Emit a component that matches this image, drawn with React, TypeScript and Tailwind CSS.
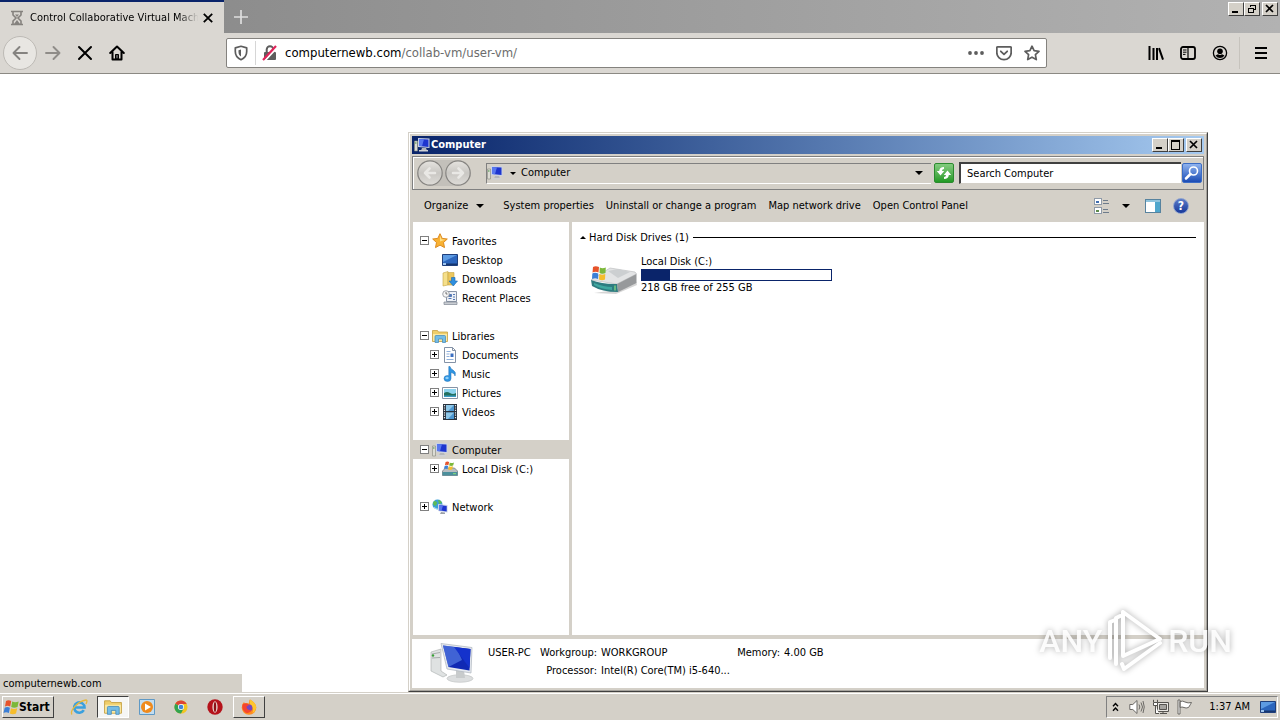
import type { ReactNode } from 'react';

type IconProps = { className?: string };

export default function App() {
  return (
    <div className="relative flex h-screen flex-col overflow-hidden bg-white font-['DejaVu_Sans_Condensed','DejaVu_Sans',sans-serif] text-[11px] leading-[14px] text-black">
      <TabStrip />
      <NavToolbar />
      <main className="relative flex flex-1 items-end">
        <p className="h-[18px] w-[242px] bg-[#d4d0c8] pl-[3px] leading-5">computernewb.com</p>
      </main>
      <ExplorerWindow />
      <Taskbar />
      <Watermark />
    </div>
  );
}

/* ---------- browser ---------- */

function TabStrip() {
  return (
    <header className="flex h-[33px] shrink-0 bg-linear-to-r from-[#858585] to-[#b2b2b2]">
      <div className="flex w-56 items-center border-t-2 border-[#0a246a] bg-[#dad7d2] pl-[10px]">
        <Hourglass className="h-4 w-3.5 shrink-0" />
        <span className="ml-1.5 w-[172px] whitespace-nowrap mask-r-from-86% mask-r-to-98%">
          Control Collaborative Virtual Mach
        </span>
        <button aria-label="Close tab" className="p-px">
          <svg viewBox="0 0 10 10" className="size-[10px]" stroke="#000" strokeWidth="1.8">
            <path d="M.8.8l8.4 8.4M9.2.8L.8 9.2" />
          </svg>
        </button>
      </div>
      <button aria-label="New tab" className="ml-[9px] self-center">
        <svg viewBox="0 0 16 16" className="size-4" stroke="#dedede" strokeWidth="1.7">
          <path d="M8 1v14M1 8h14" />
        </svg>
      </button>
      <div className="ml-auto flex pt-[2px] pr-[2px]">
        <CaptionButton label="Minimize browser" kind="min" />
        <CaptionButton label="Restore browser" kind="restore" />
        <div className="w-[2px]" />
        <CaptionButton label="Close browser" kind="close" />
      </div>
    </header>
  );
}

function NavToolbar() {
  return (
    <nav className="flex h-[41px] shrink-0 items-center border-b border-[#8b8983] bg-[#dad7d2]">
      <div className="flex w-[226px] items-center pl-[3px]">
        <button aria-label="Back" className="flex size-[34px] items-center justify-center rounded-full border border-[#bdbab5] bg-[#e8e6e2]">
          <svg viewBox="0 0 16 16" className="size-4" fill="none" stroke="#858380" strokeWidth="1.9" strokeLinecap="round" strokeLinejoin="round">
            <path d="M15 8H1.5M7.5 2L1.5 8l6 6" />
          </svg>
        </button>
        <button aria-label="Forward" className="ml-2">
          <svg viewBox="0 0 16 16" className="size-4" fill="none" stroke="#8f8c88" strokeWidth="1.9" strokeLinecap="round" strokeLinejoin="round">
            <path d="M1 8h13.5M8.500 2l6 6-6 6" />
          </svg>
        </button>
        <button aria-label="Stop" className="ml-4">
          <svg viewBox="0 0 16 16" className="size-4" stroke="#000" strokeWidth="2" strokeLinecap="round">
            <path d="M2 2l12 12M14 2L2 14" />
          </svg>
        </button>
        <button aria-label="Home" className="ml-4">
          <svg viewBox="0 0 16 16" className="size-4" fill="none" stroke="#000" strokeWidth="2" strokeLinejoin="round" strokeLinecap="round">
            <path d="M1.200 8L8 1.500 14.800 8M3.500 7v7.500h9V7" />
            <path d="M6.500 13.500v-4h3v4z" fill="#000" strokeWidth="1" />
            <path d="M8 10.500v2" stroke="#fff" strokeWidth=".7" />
          </svg>
        </button>
      </div>

      <div className="flex h-[30px] flex-1 items-center rounded-[2px] border border-[#84827e] bg-white pr-[6px] pl-1.5 text-[13px] leading-4">
        <svg viewBox="0 0 16 16" className="size-4 shrink-0" fill="none" stroke="#5d5d5d" strokeWidth="1.7">
          <path d="M8 1.300L2.300 2.900v3.600c0 4 2.200 6.700 5.700 8.200 3.500-1.500 5.700-4.200 5.700-8.200V2.900z" strokeLinejoin="round" />
          <path d="M8 4.500L5.500 5.200v1.800c0 2 .9 3.500 2.500 4.600z" fill="#5d5d5d" stroke="none" />
        </svg>
        <span className="ml-[6px] h-6 w-px bg-[#d6d6d6]" />
        <svg viewBox="0 0 16 16" className="ml-1.5 size-4 shrink-0" fill="none">
          <path d="M4.700 7V4.500a3.300 3.300 0 016.600 0V7" stroke="#5d5d5d" strokeWidth="2" />
          <rect x="2" y="7" width="12" height="8" rx="1" fill="#5d5d5d" />
          <path d="M2.500 16L15.500 2" stroke="#fff" strokeWidth="2" />
          <path d="M1 15L14 1" stroke="#e0245a" strokeWidth="2.200" />
        </svg>
        <label htmlFor="url" className="ml-[7px]">computernewb.com</label>
        <input id="url" defaultValue="/collab-vm/user-vm/" className="min-w-0 flex-1 text-[#6c6c6c] outline-none" />
        <button aria-label="Page actions">
          <svg viewBox="0 0 16 16" className="size-4" fill="#5d5d5d">
            <circle cx="2" cy="8" r="1.900" /><circle cx="8" cy="8" r="1.900" /><circle cx="14" cy="8" r="1.900" />
          </svg>
        </button>
        <button aria-label="Save to Pocket" className="ml-3">
          <svg viewBox="0 0 16 16" className="size-4" fill="none" stroke="#5d5d5d" strokeWidth="1.800" strokeLinecap="round" strokeLinejoin="round">
            <path d="M1.800 1.800h12.400q1 0 1 1V7.500a7.200 7.200 0 01-14.400 0V2.800q0-1 1-1z" />
            <path d="M4.800 6.300L8 9.300l3.200-3" />
          </svg>
        </button>
        <button aria-label="Bookmark" className="ml-3">
          <svg viewBox="0 0 16 16" className="size-4" fill="none" stroke="#5d5d5d" strokeWidth="1.700" strokeLinejoin="round">
            <path d="M8 1.200l2.100 4.500 4.900.6-3.600 3.400.9 4.900L8 12.200l-4.300 2.400.9-4.900L1 6.300l4.900-.6z" />
          </svg>
        </button>
      </div>

      <div className="flex w-[233px] items-center justify-end pr-[11px]">
        <button aria-label="Library">
          <svg viewBox="0 0 16 16" className="size-4" stroke="#000" strokeWidth="2">
            <path d="M1.500 1v14M5.500 3v12M9 3v12M11 3.200l4 11.500" />
          </svg>
        </button>
        <button aria-label="Sidebars" className="ml-4">
          <svg viewBox="0 0 16 16" className="size-4" fill="none" stroke="#000" strokeWidth="1.800">
            <rect x="1" y="2" width="14" height="12" rx="2" />
            <path d="M8 2v12" strokeWidth="1.200" />
            <path d="M3 5h3.500M3 7.200h3.500M3 9.400h2.500" strokeWidth="1" />
          </svg>
        </button>
        <button aria-label="Account" className="ml-4">
          <svg viewBox="0 0 16 16" className="size-4">
            <circle cx="8" cy="8" r="6.600" fill="none" stroke="#000" strokeWidth="1.300" />
            <circle cx="8" cy="6.200" r="2.800" />
            <path d="M3.500 10.500q1.500-1 2.500-1.200 2 1.300 4 0 1 .2 2.500 1.200Q10.800 13 8 13t-4.500-2.500z" />
          </svg>
        </button>
        <span className="mx-[11px] h-8 w-px bg-[#c6c3bd]" />
        <button aria-label="Menu" className="ml-[2px]">
          <svg viewBox="0 0 16 16" className="size-4" stroke="#000" strokeWidth="2">
            <path d="M2 3h12M2 8h12M2 13h12" />
          </svg>
        </button>
      </div>
    </nav>
  );
}

function CaptionButton({ label, kind }: { label: string; kind: 'min' | 'max' | 'restore' | 'close' }) {
  return (
    <button
      aria-label={label}
      className="flex h-[14px] w-4 items-center justify-center border border-t-white border-r-[#404040] border-b-[#404040] border-l-white bg-[#d4d0c8]"
    >
      <svg viewBox="0 0 12 10" className="h-[10px] w-3" fill="none" stroke="#000" shapeRendering="crispEdges">
        {kind === 'min' && <path d="M2 8h6" strokeWidth="2" />}
        {kind === 'max' && <path d="M1.500 1v8.500h8V1M1 1h9" strokeWidth="1.500" />}
        {kind === 'restore' && <path d="M4.500 3V1.500h5v4H8M4 1h6M2.500 4.500h5v4h-5zM2 4h6" />}
        {kind === 'close' && <path d="M2 1l7 7M9 1L2 8" strokeWidth="1.700" shapeRendering="auto" />}
      </svg>
    </button>
  );
}

/* ---------- explorer window ---------- */

function ExplorerWindow() {
  return (
    <section className="absolute top-[132px] right-[72px] bottom-7 left-[408px] z-10 flex flex-col border border-t-[#d4d0c8] border-r-[#404040] border-b-[#404040] border-l-[#d4d0c8] bg-[#d4d0c8]">
      <div className="flex min-h-0 flex-1 flex-col border border-t-white border-r-[#a5a29c] border-b-[#a5a29c] border-l-white p-[2px]">
        <div className="flex h-[18px] shrink-0 items-center bg-linear-to-r from-[#0a246a] to-[#a6caf0] px-[2px]">
          <Monitor className="size-4" />
          <h1 className="ml-px flex-1 text-[11px] font-bold text-white">Computer</h1>
          <CaptionButton label="Minimize" kind="min" />
          <CaptionButton label="Maximize" kind="max" />
          <div className="w-[2px]" />
          <CaptionButton label="Close" kind="close" />
        </div>
        <AddressRow />
        <CommandBar />
        <div className="flex min-h-0 flex-1">
          <Sidebar />
          <DrivePane />
        </div>
        <DetailsPane />
      </div>
    </section>
  );
}

function AddressRow() {
  return (
    <div className="mt-[2px] flex h-[34px] shrink-0 items-center border border-[#808080] pl-1 shadow-[inset_1px_1px_0_#fff]">
      <div className="flex rounded-full bg-[#c3c0ba]">
        <RoundArrow label="Back" d="M18 13H8M12.500 8.500L8 13l4.500 4.500" />
        <span className="w-[2px]" />
        <RoundArrow label="Forward" d="M8 13h10M13.500 8.500L18 13l-4.500 4.500" />
      </div>
      <div className="ml-[15px] flex h-[21px] flex-1 items-center border-t border-b border-l border-t-[#808080] border-b-white border-l-[#808080] pr-2">
        <Monitor className="size-4" />
        <Caret className="ml-[7px] w-1.5" />
        <button className="ml-[5px]">Computer</button>
        <button aria-label="Previous locations" className="ml-auto">
          <Caret className="w-2" />
        </button>
      </div>
      <button aria-label="Refresh" className="ml-[3px] flex size-5 items-center justify-center rounded-[2px] border border-[#2b8a2e] bg-linear-to-b from-[#83cc7f] to-[#1f9a23]">
        <svg viewBox="0 0 16 16" className="size-4" fill="#fff">
          <path d="M8 2Q3.500 2 3.200 6H.8L4.500 10.500 8.200 6H6Q6 4.200 8 4z" />
          <path d="M8 14q4.500 0 4.800-4h2.400L11.500 5.500 7.800 10H10q0 1.800-2 2z" />
        </svg>
      </button>
      <input
        aria-label="Search Computer"
        placeholder="Search Computer"
        className="ml-[5px] h-[22px] w-[222px] border-t-2 border-b border-l-2 border-t-[#404040] border-b-[#d4d0c8] border-l-[#404040] bg-white pl-1.5 outline-none placeholder:text-black placeholder:opacity-100"
      />
      <button aria-label="Search" className="mx-px flex size-5 items-center justify-center rounded-[2px] border border-[#3b6cc5] bg-linear-to-b from-[#8fb2ee] to-[#1b4bb4]">
        <svg viewBox="0 0 16 16" className="size-4" fill="none" stroke="#fff">
          <circle cx="9.500" cy="6" r="4" strokeWidth="1.600" />
          <path d="M6.500 9L2 13.500" strokeWidth="2.500" strokeLinecap="round" />
        </svg>
      </button>
    </div>
  );
}

function RoundArrow({ label, d }: { label: string; d: string }) {
  return (
    <button aria-label={label}>
      <svg viewBox="0 0 26 26" className="size-[26px]">
        <defs>
          <linearGradient id="knob" x1="0" y1="0" x2="0" y2="1">
            <stop offset="0" stopColor="#e6e4e0" />
            <stop offset=".5" stopColor="#c9c7c3" />
            <stop offset="1" stopColor="#dedcd8" />
          </linearGradient>
        </defs>
        <circle cx="13" cy="13" r="12.200" fill="url(#knob)" stroke="#868481" strokeWidth="1.200" />
        <path d={d} fill="none" stroke="#e9e8e5" strokeWidth="2.600" strokeLinecap="round" strokeLinejoin="round" />
      </svg>
    </button>
  );
}

function Caret({ className }: IconProps) {
  return (
    <svg viewBox="0 0 8 4" className={className}>
      <path d="M0 0h8L4 4z" />
    </svg>
  );
}

function CommandBar() {
  return (
    <div className="flex h-8 shrink-0 items-center pl-3 whitespace-nowrap">
      <button className="flex items-center">
        Organize
        <Caret className="ml-2 w-2" />
      </button>
      <button className="ml-[19px]">System properties</button>
      <button className="ml-3">Uninstall or change a program</button>
      <button className="ml-3">Map network drive</button>
      <button className="ml-3">Open Control Panel</button>
      <div className="ml-auto flex items-center pr-[15px]">
        <button aria-label="Change view">
          <svg viewBox="0 0 18 16" className="h-4 w-[18px]" shapeRendering="crispEdges">
            <path d="M1.500.5h7v6h-7zM1.500 9.500h7v6h-7z" fill="#fff" stroke="#8f9aa8" />
            <path d="M3 3h3v2H3z" fill="#3f6db0" />
            <path d="M3 12h3v2H3z" fill="#5f8b4e" />
            <path d="M10 2.500h5M10 5.500h6M10 11.500h5M10 14.500h6" stroke="#6d7b8b" />
          </svg>
        </button>
        <button aria-label="More options" className="ml-[11px]">
          <Caret className="w-2" />
        </button>
        <button aria-label="Preview pane" className="ml-[15px]">
          <svg viewBox="0 0 16 14" className="h-[14px] w-4" shapeRendering="crispEdges">
            <path d="M.5.5h15v13H.5z" fill="#fff" stroke="#57839f" />
            <path d="M1 1h14v2H1z" fill="#8fc3dc" />
            <path d="M10 3h5v10h-5z" fill="#4fa6cc" />
          </svg>
        </button>
        <button aria-label="Help" className="ml-3 flex size-4 items-center justify-center rounded-full border border-[#8ea3cf] bg-linear-to-b from-[#5d7cc8] to-[#17379a] text-xs font-bold text-white">
          ?
        </button>
      </div>
    </div>
  );
}

const groups = [
  {
    label: 'Favorites', icon: Star, open: true,
    items: [
      { label: 'Desktop', icon: DesktopIcon },
      { label: 'Downloads', icon: Downloads },
      { label: 'Recent Places', icon: Recent },
    ],
  },
  {
    label: 'Libraries', icon: Folder, open: true, expandable: true,
    items: [
      { label: 'Documents', icon: Documents },
      { label: 'Music', icon: Music },
      { label: 'Pictures', icon: Pictures },
      { label: 'Videos', icon: Videos },
    ],
  },
  {
    label: 'Computer', icon: Monitor, open: true, expandable: true, selected: true,
    items: [{ label: 'Local Disk (C:)', icon: Drive }],
  },
  { label: 'Network', icon: Network, open: false, items: [] },
];

function Sidebar() {
  return (
    <aside className="w-40 shrink-0 border-r-[3px] border-l border-[#d4d0c8] bg-white pt-[9px]">
      {groups.map((group) => (
        <ul key={group.label} className="mb-[19px]">
          <li className={`flex h-[19px] items-center pl-[7px] ${group.selected ? 'bg-[#d4d0c8]' : ''}`}>
            <Expander open={group.open} label={group.label} />
            <button className="ml-[3px] flex items-center gap-1">
              <group.icon className="size-4" />
              <span className="pt-[2px]">{group.label}</span>
            </button>
          </li>
          {group.items.map((item) => (
            <li key={item.label} className="flex h-[19px] items-center pl-[17px]">
              {group.expandable ? <Expander open={false} label={item.label} /> : <span className="w-[9px]" />}
              <button className="ml-[3px] flex items-center gap-1">
                <item.icon className="size-4" />
                <span className="pt-[2px]">{item.label}</span>
              </button>
            </li>
          ))}
        </ul>
      ))}
    </aside>
  );
}

function Expander({ open, label }: { open: boolean; label: string }) {
  return (
    <button aria-label={`${open ? 'Collapse' : 'Expand'} ${label}`}>
      <svg viewBox="0 0 9 9" className="size-[9px]" shapeRendering="crispEdges">
        <path d="M.5.5h8v8h-8z" fill="#fff" stroke="#808080" />
        <path d={open ? 'M2 4.500h5' : 'M2 4.500h5M4.500 2v5'} stroke="#000" />
      </svg>
    </button>
  );
}

function DrivePane() {
  const usedPercent = 15;

  return (
    <div className="flex-1 bg-white px-2 pt-2">
      <h2 className="flex items-center">
        <svg viewBox="0 0 6 3" className="w-1.5"><path d="M0 3h6L3 0z" /></svg>
        <span className="ml-[3px] pt-px">Hard Disk Drives (1)</span>
        <span className="ml-1 h-px flex-1 bg-black" />
      </h2>
      <div className="mt-[10px] flex pl-[10px]">
        <BigDrive className="h-8 w-[48px] self-end" />
        <div className="ml-[3px]">
          <p>Local Disk (C:)</p>
          <div role="progressbar" aria-label="Used space" aria-valuenow={usedPercent} className="h-3 w-[191px] border border-[#0a246a]">
            <div className="h-full bg-[#0a246a]" style={{ width: `${usedPercent}%` }} />
          </div>
          <p>218 GB free of 255 GB</p>
        </div>
      </div>
    </div>
  );
}

function DetailsPane() {
  return (
    <footer className="flex h-[53px] shrink-0 border-t-4 border-[#d4d0c8] bg-white pt-1 pl-[18px]">
      <BigMonitor className="h-10 w-[45px]" />
      <dl className="ml-[13px] grid auto-rows-[18px] grid-cols-[48px_57px_132px_43px_1fr] items-center gap-x-1 pt-px whitespace-nowrap">
        <dt>USER-PC</dt>
        <dt className="text-right">Workgroup:</dt>
        <dd>WORKGROUP</dd>
        <dt className="text-right">Memory:</dt>
        <dd>4.00 GB</dd>
        <dt className="col-start-2 text-right">Processor:</dt>
        <dd>Intel(R) Core(TM) i5-640...</dd>
      </dl>
    </footer>
  );
}

/* ---------- taskbar ---------- */

function Taskbar() {
  return (
    <footer className="flex h-7 shrink-0 items-center border-t border-[#d4d0c8] bg-[#d4d0c8] px-[2px] shadow-[inset_0_1px_0_#fff]">
      <button className="flex h-[22px] w-[52px] items-center border border-t-white border-r-[#404040] border-b-[#404040] border-l-white text-xs font-bold">
        <Flag className="size-4 shrink-0" />
        Start
      </button>
      <TaskButton label="Internet Explorer" className="ml-[9px] border-transparent">
        <svg viewBox="0 0 18 18" className="size-[18px]" fill="none">
          <path d="M13.800 12.200a5.200 5.200 0 11.700-2.700H5" stroke="#3aa0de" strokeWidth="2.600" />
          <path d="M2 16.500C-.5 13 8 3 16 2c1.500 0 1 2 0 4" stroke="#e6b83c" strokeWidth="1.300" />
        </svg>
      </TaskButton>
      <TaskButton label="Explorer" className="border-t-[#404040] border-r-white border-b-white border-l-[#404040] bg-white/80">
        <Folder className="size-[18px]" />
      </TaskButton>
      <TaskButton label="Media Player" className="border-transparent">
        <svg viewBox="0 0 16 16" className="size-4">
          <path d="M.5.5h15v15H.5z" fill="#c3ddf0" stroke="#5f99c5" />
          <circle cx="8" cy="8" r="6" fill="#ef8a1d" />
          <path d="M6 4.500v7L12 8z" fill="#fff" />
        </svg>
      </TaskButton>
      <TaskButton label="Chrome" className="border-transparent">
        <svg viewBox="0 0 16 16" className="size-[14px]">
          <circle cx="8" cy="8" r="7.500" fill="#f2c522" />
          <path d="M8 8L1.500 4.200A7.500 7.500 0 0114.500 4.500H8z" fill="#dd4436" />
          <path d="M8 8L1.500 4.200A7.500 7.500 0 008 15.500l3.200-6z" fill="#32a350" />
          <circle cx="8" cy="8" r="3.500" fill="#fff" />
          <circle cx="8" cy="8" r="2.700" fill="#4285d8" />
        </svg>
      </TaskButton>
      <TaskButton label="Opera" className="border-transparent">
        <svg viewBox="0 0 16 16" className="size-4">
          <circle cx="8" cy="8" r="7.700" fill="#b5121b" />
          <ellipse cx="8" cy="8" rx="2.600" ry="5.800" fill="#e9d3cd" />
          <ellipse cx="8" cy="8" rx="1.200" ry="5" fill="#8d1015" />
        </svg>
      </TaskButton>
      <TaskButton label="Firefox" className="border-t-white border-r-[#404040] border-b-[#404040] border-l-white">
        <svg viewBox="0 0 16 16" className="size-4">
          <path d="M9 .5q6 3.500 6.300 8a7.200 7.200 0 01-14.600 0Q.7 5 3 3l.8 1.500Q6 3.500 8 4.500 7.500 2 9 .5z" fill="#ff8a1f" />
          <path d="M9 .5q6 3.500 6.300 8-1 4.500-4 5.500 2-4-.8-7Q7.500 4 9 .5z" fill="#ffc62e" />
          <circle cx="8" cy="9" r="3.400" fill="#7547c0" />
          <path d="M1.500 5.500q4-2.500 6.500.5L5.500 7.500q0 4 5 3.800-2 4-6 2.200Q.5 11 1.500 5.500z" fill="#f5452f" />
        </svg>
      </TaskButton>

      <div className="ml-auto flex h-[22px] items-center border border-t-[#808080] border-r-white border-b-white border-l-[#808080] pr-px pl-[5px]">
        <button aria-label="Show hidden icons">
          <svg viewBox="0 0 7 10" className="h-[10px] w-[7px]" fill="none" stroke="#000" strokeWidth="1.400">
            <path d="M1 4.200l2.500-2.700L6 4.200M1 8.700L3.500 6 6 8.700" />
          </svg>
        </button>
        <svg viewBox="0 0 16 16" className="ml-[10px] size-4" fill="#fff" stroke="#6b6965">
          <path d="M.8 5.500h3L8 1.500v13l-4.200-4h-3z" />
          <path d="M10 5.500q1.700 2.500 0 5M12 3.500q3 4.500 0 9M14 2q2.500 6 0 12" fill="none" />
        </svg>
        <svg viewBox="0 0 16 16" className="ml-2 size-4" fill="#e8e6e2" stroke="#55534f">
          <path d="M4.500 3.500h11v9h-11zM7 14.500h7M10 12.500v2" />
          <path d="M6.500 5.500h7v5h-7z" fill="#a5a39f" />
          <path d="M.5 3V.8M4.500 3V.8M.5 3.500h4v3h-4zM2.500 6.500v8H6" fill="#fff" />
        </svg>
        <svg viewBox="0 0 16 16" className="ml-2 size-4" fill="#fff" stroke="#6b6965">
          <path d="M1 1h2v14H1zM3 2.500q3-1 5 .5 3 1.500 6.500.5-1 2-3 5Q9 9.500 7 8.500q-2-1-4 0z" />
        </svg>
        <time className="ml-4">1:37 AM</time>
        <button aria-label="Show desktop" className="ml-[10px]">
          <DesktopIcon className="size-4" />
        </button>
      </div>
    </footer>
  );
}

function TaskButton({ label, className, children }: { label: string; className: string; children: ReactNode }) {
  return (
    <button aria-label={label} className={`mr-[2px] flex h-[22px] w-8 items-center justify-center border ${className}`}>
      {children}
    </button>
  );
}

function Watermark() {
  return (
    <div className="pointer-events-none absolute right-12 bottom-[46px] z-20 flex items-center font-[Roboto,sans-serif] text-[32px] leading-[66px] font-medium text-white/90 drop-shadow-[0_0_3px_rgba(0,0,0,0.35)]">
      <span>ANY</span>
      <svg viewBox="0 0 62 66" className="h-[66px] w-[66px]" fill="none" stroke="#fff" strokeWidth="4" strokeLinejoin="round" strokeLinecap="round">
        <path d="M6 50V14l5-2" />
        <path d="M12 56V10l4-2" />
        <path d="M19 4v44l37-17z" />
        <path d="M56 35L20 61l-2-5" />
      </svg>
      <span>RUN</span>
    </div>
  );
}

/* ---------- icons ---------- */

function Hourglass({ className }: IconProps) {
  return (
    <svg viewBox="0 0 14 16" className={className} fill="none" stroke="#85827e" strokeWidth="1.600">
      <path d="M1 1.500h12M1 14.500h12M3 2v3l3 3-3 3v3M11 2v3L8 8l3 3v3" />
      <path d="M4 14l3-4 3 4zM5 4.500h4L7 7z" fill="#85827e" stroke="none" />
    </svg>
  );
}

function Monitor({ className }: IconProps) {
  return (
    <svg viewBox="0 0 16 16" className={className}>
      <path d="M.5 4h3v10h-3z" fill="#dcdcd4" stroke="#85867e" strokeWidth=".6" />
      <path d="M1 6h1.500" stroke="#3e9440" />
      <path d="M4 1l11.500.5v9.500L4 10z" fill="#c9d2e6" />
      <path d="M5 2l9.500.5v7.500L5 9z" fill="#1d35cf" />
      <path d="M5 2l5 .3L8 9.300 5 9z" fill="#5877ee" />
      <path d="M8 11h4l1 2.500H7z" fill="#b4b7bc" />
      <path d="M5 13h9v1.500H5z" fill="#cfd1d4" />
    </svg>
  );
}

function BigMonitor({ className }: IconProps) {
  return (
    <svg viewBox="0 0 45 40" className={className}>
      <path d="M1 9l10-3v22l6 4-4 2L1 28z" fill="#dfe2e2" stroke="#a8acac" strokeWidth=".6" />
      <path d="M2 11l8-1.500M2 15l8-.5" stroke="#8d9292" strokeWidth=".7" />
      <circle cx="3" cy="12.500" r="1.200" fill="#39a136" />
      <ellipse cx="30" cy="35.500" rx="13" ry="3.800" fill="#dcdedf" stroke="#bcbfc0" strokeWidth=".6" />
      <path d="M26 27h8l1 8h-9z" fill="#c8cbcc" />
      <path d="M11 .5l31 4-1 25.500-24-4z" fill="#e5e9ef" stroke="#adb4bd" strokeWidth=".7" />
      <path d="M13 2.500l27.500 3.500-1 21.500L18.500 24z" fill="#1029b4" />
      <path d="M13 2.500l13 1.600 6 13L18.500 24z" fill="#5b82e6" opacity=".65" />
      <path d="M24 4l16.500 2-1 19z" fill="#1432cc" />
    </svg>
  );
}

function Star({ className }: IconProps) {
  return (
    <svg viewBox="0 0 16 16" className={className}>
      <path d="M8 .7l2.200 4.700 5.100.6-3.800 3.500 1 5.100L8 12.100l-4.500 2.500 1-5.100L.7 6l5.100-.6z" fill="#f9b233" stroke="#dc8a20" strokeLinejoin="round" />
      <path d="M8 2.500l1.500 3.800 3.700.4L8 8.500z" fill="#fde08a" />
    </svg>
  );
}

function DesktopIcon({ className }: IconProps) {
  return (
    <svg viewBox="0 0 16 16" className={className}>
      <path d="M.5 2.500h15v11H.5z" fill="#2c66bd" stroke="#1f3f7c" />
      <path d="M1 3h14L1 10z" fill="#5d9be3" />
      <path d="M1 11.500h14V13H1z" fill="#16366f" />
      <path d="M1 11h3v2H1z" fill="#9dc4ee" />
    </svg>
  );
}

function Downloads({ className }: IconProps) {
  return (
    <svg viewBox="0 0 16 16" className={className}>
      <path d="M1 2l5-1.500V14L1 15z" fill="#f5df8a" stroke="#c4a445" strokeWidth=".6" />
      <path d="M6 1.500h6V14H6z" fill="#ecc75e" stroke="#c4a445" strokeWidth=".6" />
      <path d="M9.500 6.500h3.500V10h2.500l-4.200 5L7 10h2.500z" fill="#2f8fdf" stroke="#1b68b0" strokeWidth=".6" />
    </svg>
  );
}

function Recent({ className }: IconProps) {
  return (
    <svg viewBox="0 0 16 16" className={className}>
      <path d="M4.500 1.500h10v10h-10z" fill="#eef1f6" stroke="#8a95a7" />
      <path d="M6.500 4.500h3v2h-3zM6.500 8.500h3M11 4.500h2M11 7h2M11 9.500h2" fill="#5478b5" stroke="#5478b5" />
      <path d="M2 12h13v2.500H2z" fill="#c9cdd3" stroke="#7f8793" strokeWidth=".7" />
      <circle cx="4" cy="4" r="3.300" fill="#f6f6f6" stroke="#8b8f96" strokeWidth=".8" />
      <path d="M4 2v2h1.500" fill="none" stroke="#555" strokeWidth=".8" />
    </svg>
  );
}

function Folder({ className }: IconProps) {
  return (
    <svg viewBox="0 0 16 16" className={className}>
      <path d="M.5 2.500h5l1 1.500h9v9.500H.5z" fill="#efce6a" stroke="#c6a143" strokeWidth=".8" />
      <path d="M1 6h14v7H1z" fill="#fbe9a4" />
      <path d="M3 14.500V8.500q0-1 1-1h8.500q1 0 1 1v6h-3V11h-4v3.500z" fill="#74bce6" stroke="#3d87b8" strokeWidth=".7" />
    </svg>
  );
}

function Documents({ className }: IconProps) {
  return (
    <svg viewBox="0 0 16 16" className={className}>
      <path d="M2.500.5h8l3 3v12h-11z" fill="#fff" stroke="#8492a6" />
      <path d="M10.500.5v3h3" fill="none" stroke="#8492a6" />
      <path d="M4.500 4.500h4M4.500 7h3M4.500 9.500h3M4.500 12.500h7" stroke="#8fb0dd" />
      <path d="M8.500 6.500h3v3.500h-3z" fill="#3b6fc2" />
    </svg>
  );
}

function Music({ className }: IconProps) {
  return (
    <svg viewBox="0 0 16 16" className={className}>
      <path d="M8 .5q.5 2.500 3 3.500 3.500 2 2 6 0-3-4-3.500v6q0 3-3.500 3T2 12.500q0-3 3.500-3 .7 0 1.300.2V.5z" fill="#2f95e2" stroke="#1b6cb4" strokeWidth=".5" />
      <ellipse cx="5" cy="12" rx="1.700" ry="1.300" fill="#8fd0fa" />
    </svg>
  );
}

function Pictures({ className }: IconProps) {
  return (
    <svg viewBox="0 0 16 16" className={className}>
      <path d="M.5 2.500h15v11H.5z" fill="#fff" stroke="#8694a6" />
      <path d="M2 4h12v8H2z" fill="#8cd3ee" />
      <path d="M2 8q3-2 6 0t6 0v4H2z" fill="#23705e" />
      <path d="M2 10.500h12V12H2z" fill="#3a9bc3" />
    </svg>
  );
}

function Videos({ className }: IconProps) {
  return (
    <svg viewBox="0 0 16 16" className={className}>
      <path d="M1 0h14v16H1z" fill="#28323d" />
      <path d="M4 1h8v6H4zM4 8.500h8V15H4z" fill="#4c97d2" />
      <path d="M4 1h8L6 7H4zM4 8.500h8L6 15H4z" fill="#8ec7e8" />
      <path d="M2.500 1v14M13.500 1v14" stroke="#e5e9ed" strokeWidth="1.200" strokeDasharray="1.200 1.200" />
    </svg>
  );
}

function Flag({ className }: IconProps) {
  return (
    <svg viewBox="0 0 16 16" className={className}>
      <path d="M3 2q2.500-1.700 5.200 0L7.200 7.500q-2.700-1.500-5.200 0z" fill="#e6532a" />
      <path d="M9.200 2.500q2.800 1.500 6.500 0L14.500 8q-3.300 1.300-6.300 0z" fill="#7cb83a" />
      <path d="M1.700 8.700q2.500-1.600 5.200 0L5.900 14Q3 12.400.5 14z" fill="#3b7fd6" />
      <path d="M8 9.200q2.900 1.400 6.200 0L13 14.500q-3.300 1.400-6.100 0z" fill="#f6bd2c" />
    </svg>
  );
}

function Drive({ className }: IconProps) {
  return (
    <svg viewBox="0 0 16 16" className={className}>
      <path d="M.5 10l3-3h9L15.500 10v4.500H.5z" fill="#b9bdc1" stroke="#6b7176" strokeWidth=".7" />
      <path d="M.5 11h15v3.500H.5z" fill="#4b8f9c" />
      <path d="M11 12.700h3" stroke="#8be07a" />
      <g transform="translate(1.500 -1) scale(.7)">
        <path d="M3 3q2.500-1.700 5 0L7 7.500q-2.500-1.500-5 0z" fill="#e6532a" />
        <path d="M9 3.500q2.500 1.500 6 0L13.800 8q-3 1.300-5.800 0z" fill="#7cb83a" />
        <path d="M1.700 8.500q2.500-1.600 5 0L5.500 13q-2.500-1.600-5 0z" fill="#3b7fd6" />
        <path d="M7.700 9q2.800 1.400 5.800 0l-1.200 4.500q-3 1.400-5.700 0z" fill="#f6bd2c" />
      </g>
    </svg>
  );
}

function BigDrive({ className }: IconProps) {
  return (
    <svg viewBox="0 0 48 32" className={className}>
      <path d="M4 30l22 1 21-9-1-4-20 9z" fill="#b9b9b9" opacity=".6" />
      <path d="M1 17L20 5l25 4 1.500 2L27 21z" fill="#e3e4e5" stroke="#b5b7b9" strokeWidth=".6" />
      <path d="M18 8l10-2 12 3-12 6z" fill="#cccfd1" />
      <path d="M27 21l19.500-10v9L28 29z" fill="#97999b" />
      <path d="M1 17q12 4.500 26 4l1 8q-16 0-26-6z" fill="#2e7c80" />
      <path d="M4 20q10 4 18 4v3q-12-1-18-5z" fill="#3fa8a0" />
      <path d="M25 22.500v5" stroke="#8de27f" strokeWidth="1.200" />
      <g transform="translate(0 2)">
        <path d="M3 2q2.500-1.700 6 0L8.500 7.500q-3-1.500-6 0z" fill="#e6532a" />
        <path d="M9.800 2.500q2.500 1.500 6 0L15.500 8q-3 1.300-6 0z" fill="#7cb83a" />
        <path d="M2.300 8.500q2.500-1.600 6 0L8 14q-3-1.600-6 0z" fill="#3b7fd6" />
        <path d="M9.300 9q2.800 1.400 6 0L15 14.500q-3 1.400-6 0z" fill="#f6bd2c" />
      </g>
    </svg>
  );
}

function Network({ className }: IconProps) {
  return (
    <svg viewBox="0 0 16 16" className={className}>
      <circle cx="5.500" cy="5.500" r="5" fill="#3ba0d8" />
      <path d="M2 2q3 0 3 2T3 7Q1 6 1 4zM6 1q3 0 4 3L7 5z" fill="#5dbb55" />
      <path d="M2 8.500Q5 11 8 10" fill="none" stroke="#b5e3f4" />
      <path d="M6 5l9.500 1v7.500L6 12z" fill="#c9d2e6" />
      <path d="M7 6l7.700.9v5.600L7 11.300z" fill="#1d35cf" />
      <path d="M7 6l4 .5-1.500 5.200L7 11.300z" fill="#5877ee" />
      <path d="M9 13l4 .5V15H8z" fill="#9ba0a8" />
    </svg>
  );
}
